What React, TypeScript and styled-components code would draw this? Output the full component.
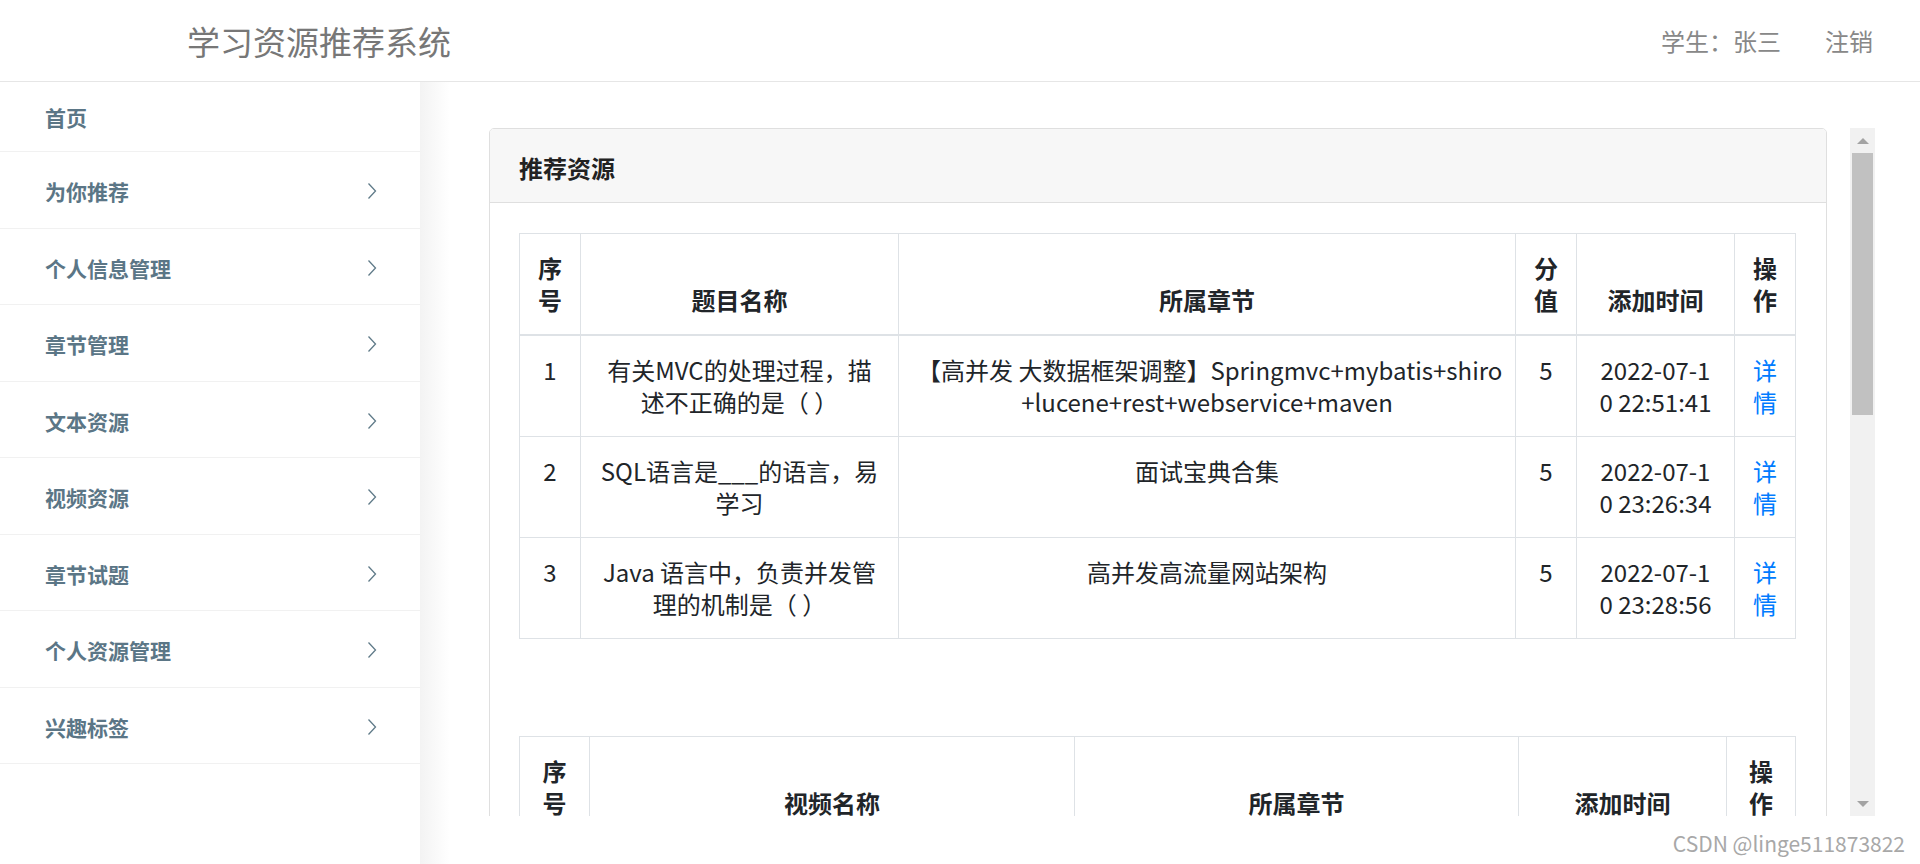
import React from "react";
import styled, { createGlobalStyle } from "styled-components";

const GlobalStyle = createGlobalStyle`
  html, body { margin: 0; padding: 0; background: #fff; }
  body {
    font-family: "Noto Sans CJK SC", "Noto Sans", sans-serif;
    overflow: hidden;
  }
  * { box-sizing: border-box; }
`;

const Page = styled.div`
  position: relative;
  width: 1920px;
  height: 864px;
  display: flex;
  flex-direction: column;
  overflow: hidden;
  background: #fff;
`;

const TopBar = styled.header`
  height: 82px;
  flex-shrink: 0;
  display: flex;
  align-items: center;
  padding: 0 47px 0 187px;
  border-bottom: 1px solid #e6e6e6;
  background: #fff;
`;

const Brand = styled.div`
  font-size: 33px;
  color: #777;
`;

const UserBox = styled.div`
  margin-left: auto;
  display: flex;
  gap: 44px;
  font-size: 24px;
  color: #888;
`;

const UserLink = styled.a`
  color: inherit;
  text-decoration: none;
  cursor: pointer;
`;

const Body = styled.div`
  flex: 1;
  display: flex;
  min-height: 0;
`;

const Sidebar = styled.nav`
  width: 420px;
  flex-shrink: 0;
  background: #fff;
  position: relative;
  z-index: 1;
  &::after {
    content: "";
    position: absolute;
    top: 0;
    bottom: 0;
    left: 100%;
    width: 30px;
    background: linear-gradient(to right, #f3f3f3, rgba(255, 255, 255, 0));
  }
`;

const Menu = styled.ul`
  list-style: none;
  margin: 0;
  padding: 0;
`;

const MenuItem = styled.li<{ $first?: boolean }>`
  height: ${(p) => (p.$first ? "70px" : "76.5px")};
  display: flex;
  align-items: center;
  justify-content: space-between;
  padding: ${(p) => (p.$first ? "0 43px 0 45px" : "3px 43px 0 45px")};
  border-bottom: 1px solid #f1f1f1;
  font-size: 21px;
  font-weight: 700;
  color: #5b7686;
  cursor: pointer;
`;

const Chevron = () => (
  <svg width="10" height="18" viewBox="0 0 10 18" fill="none">
    <path d="M1.5 1.5 L8.5 9 L1.5 16.5" stroke="#5f7a88" strokeWidth="1.3" />
  </svg>
);

const Main = styled.main`
  flex: 1;
  min-width: 0;
  padding: 46px 45px 0 69px;
`;

const Frame = styled.div`
  height: 688px;
  display: flex;
`;

const Viewport = styled.div`
  flex: 1;
  min-width: 0;
  overflow: hidden;
  padding-right: 23px;
`;

const Card = styled.section`
  border: 1px solid #dfdfdf;
  border-radius: 5px;
  background: #fff;
`;

const CardHeader = styled.div`
  height: 74px;
  display: flex;
  align-items: center;
  padding: 4px 29px 0;
  background: #f7f7f7;
  border-bottom: 1px solid #dfdfdf;
  border-radius: 4px 4px 0 0;
  font-size: 24px;
  font-weight: 700;
  color: #222;
`;

const CardBody = styled.div`
  padding: 30px 30px 0 29px;
`;

const Table = styled.table<{ $gap?: number }>`
  width: 1276px;
  border-collapse: collapse;
  table-layout: fixed;
  color: #212529;
  font-size: 24px;
  line-height: 32px;
  margin-bottom: ${(p) => p.$gap ?? 0}px;
`;

const Th = styled.th`
  border: 1px solid #dee2e6;
  border-bottom: 2px solid #dee2e6;
  padding: 18px;
  vertical-align: bottom;
  text-align: center;
  font-weight: 700;
`;

const Td = styled.td`
  border: 1px solid #dee2e6;
  padding: 18px;
  vertical-align: top;
  text-align: center;
  font-weight: 400;
`;

const Line = styled.span`
  display: block;
  white-space: nowrap;
`;

const DetailLink = styled.a`
  color: #007bff;
  text-decoration: none;
  cursor: pointer;
`;

const ScrollTrack = styled.div`
  width: 25px;
  flex-shrink: 0;
  background: #f1f1f1;
  display: flex;
  flex-direction: column;
`;

const ScrollButton = styled.div<{ $dir: "up" | "down" }>`
  height: 25px;
  flex-shrink: 0;
  display: flex;
  align-items: center;
  justify-content: center;
  &::before {
    content: "";
    width: 0;
    height: 0;
    border-left: 6px solid transparent;
    border-right: 6px solid transparent;
    ${(p) =>
      p.$dir === "up"
        ? "border-bottom: 6px solid #a3a3a3;"
        : "border-top: 6px solid #a3a3a3;"}
  }
`;

const ScrollThumb = styled.div`
  height: 262px;
  margin: 0 2px;
  background: #c1c1c1;
  flex-shrink: 0;
`;

const ScrollSpacer = styled.div`
  flex: 1;
`;

const Watermark = styled.div`
  position: absolute;
  right: 15px;
  bottom: 6px;
  font-size: 21px;
  color: #a8a8a8;
  text-shadow: 0 0 1px #fff;
  z-index: 3;
`;

const Lines = ({ lines }: { lines: string[] }) => (
  <>
    {lines.map((l, i) => (
      <Line key={i}>{l}</Line>
    ))}
  </>
);

const menuItems = [
  "首页",
  "为你推荐",
  "个人信息管理",
  "章节管理",
  "文本资源",
  "视频资源",
  "章节试题",
  "个人资源管理",
  "兴趣标签",
];

const questions = [
  {
    id: "1",
    title: ["有关MVC的处理过程，描", "述不正确的是（ ）"],
    chapter: ["【高并发 大数据框架调整】Springmvc+mybatis+shiro", "+lucene+rest+webservice+maven"],
    score: "5",
    time: ["2022-07-1", "0 22:51:41"],
  },
  {
    id: "2",
    title: ["SQL语言是___的语言，易", "学习"],
    chapter: ["面试宝典合集"],
    score: "5",
    time: ["2022-07-1", "0 23:26:34"],
  },
  {
    id: "3",
    title: ["Java 语言中，负责并发管", "理的机制是（ ）"],
    chapter: ["高并发高流量网站架构"],
    score: "5",
    time: ["2022-07-1", "0 23:28:56"],
  },
];

export default function App() {
  return (
    <>
      <GlobalStyle />
      <Page>
        <TopBar>
          <Brand>学习资源推荐系统</Brand>
          <UserBox>
            <span>学生：张三</span>
            <UserLink>注销</UserLink>
          </UserBox>
        </TopBar>
        <Body>
          <Sidebar>
            <Menu>
              {menuItems.map((m, i) => (
                <MenuItem key={m} $first={i === 0}>
                  <span>{m}</span>
                  {i > 0 && <Chevron />}
                </MenuItem>
              ))}
            </Menu>
          </Sidebar>
          <Main>
            <Frame>
              <Viewport>
                <Card>
                  <CardHeader>推荐资源</CardHeader>
                  <CardBody>
                    <Table $gap={97}>
                      <colgroup>
                        <col style={{ width: 61 }} />
                        <col style={{ width: 318 }} />
                        <col style={{ width: 617 }} />
                        <col style={{ width: 61 }} />
                        <col style={{ width: 158 }} />
                        <col style={{ width: 61 }} />
                      </colgroup>
                      <thead>
                        <tr>
                          <Th>序号</Th>
                          <Th>题目名称</Th>
                          <Th>所属章节</Th>
                          <Th>分值</Th>
                          <Th>添加时间</Th>
                          <Th>操作</Th>
                        </tr>
                      </thead>
                      <tbody>
                        {questions.map((q) => (
                          <tr key={q.id}>
                            <Td>{q.id}</Td>
                            <Td>
                              <Lines lines={q.title} />
                            </Td>
                            <Td>
                              <Lines lines={q.chapter} />
                            </Td>
                            <Td>{q.score}</Td>
                            <Td>
                              <Lines lines={q.time} />
                            </Td>
                            <Td>
                              <DetailLink>
                                <Lines lines={["详", "情"]} />
                              </DetailLink>
                            </Td>
                          </tr>
                        ))}
                      </tbody>
                    </Table>
                    <Table>
                      <colgroup>
                        <col style={{ width: 70 }} />
                        <col style={{ width: 485 }} />
                        <col style={{ width: 444 }} />
                        <col style={{ width: 208 }} />
                        <col style={{ width: 69 }} />
                      </colgroup>
                      <thead>
                        <tr>
                          <Th>序号</Th>
                          <Th>视频名称</Th>
                          <Th>所属章节</Th>
                          <Th>添加时间</Th>
                          <Th>操作</Th>
                        </tr>
                      </thead>
                      <tbody>
                        <tr>
                          <Td>1</Td>
                          <Td>Java基础视频教程</Td>
                          <Td>面试宝典合集</Td>
                          <Td>
                            <Lines lines={["2022-07-1", "0 23:30:12"]} />
                          </Td>
                          <Td>
                            <DetailLink>
                              <Lines lines={["详", "情"]} />
                            </DetailLink>
                          </Td>
                        </tr>
                      </tbody>
                    </Table>
                  </CardBody>
                </Card>
              </Viewport>
              <ScrollTrack>
                <ScrollButton $dir="up" />
                <ScrollThumb />
                <ScrollSpacer />
                <ScrollButton $dir="down" />
              </ScrollTrack>
            </Frame>
          </Main>
        </Body>
        <Watermark>CSDN @linge511873822</Watermark>
      </Page>
    </>
  );
}
